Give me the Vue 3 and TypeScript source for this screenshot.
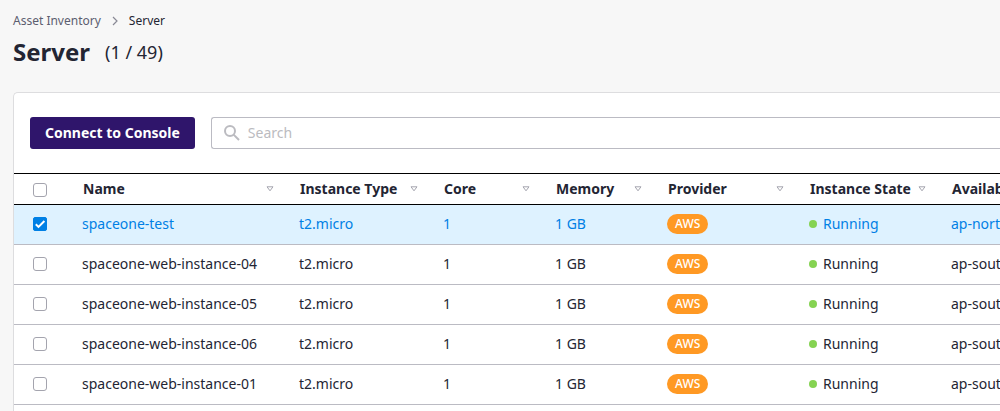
<script setup lang="ts">
import { computed, ref } from 'vue'

interface Column {
  key: string
  label: string
}

interface Server {
  name: string
  type: string
  core: number
  memory: string
  provider: string
  state: string
  zone: string
}

const columns: Column[] = [
  { key: 'name', label: 'Name' },
  { key: 'type', label: 'Instance Type' },
  { key: 'core', label: 'Core' },
  { key: 'memory', label: 'Memory' },
  { key: 'provider', label: 'Provider' },
  { key: 'state', label: 'Instance State' },
  { key: 'zone', label: 'Availability Zone' },
]

const makeServer = (name: string, zone: string): Server => ({
  name,
  type: 't2.micro',
  core: 1,
  memory: '1 GB',
  provider: 'AWS',
  state: 'Running',
  zone,
})

const servers: Server[] = [
  makeServer('spaceone-test', 'ap-northeast-2a'),
  makeServer('spaceone-web-instance-04', 'ap-southeast-1a'),
  makeServer('spaceone-web-instance-05', 'ap-southeast-1a'),
  makeServer('spaceone-web-instance-06', 'ap-southeast-1a'),
  makeServer('spaceone-web-instance-01', 'ap-southeast-1a'),
]

const total = 49
const query = ref('')
const selected = ref<string[]>(['spaceone-test'])

const allSelected = computed({
  get: () => selected.value.length === servers.length,
  set: (on: boolean) => {
    selected.value = on ? servers.map((s) => s.name) : []
  },
})
</script>

<template>
  <main class="page">
    <header class="heading">
      <nav class="crumbs" aria-label="Breadcrumb">
        <a href="#inventory">Asset Inventory</a>
        <svg class="chevron" viewBox="0 0 8 10" aria-hidden="true"><path d="M2 1l4 4-4 4" /></svg>
        <a href="#server" class="current" aria-current="page">Server</a>
      </nav>
      <div class="title-row">
        <h1>Server</h1>
        <span class="count">({{ selected.length }} / {{ total }})</span>
      </div>
    </header>

    <section class="card">
      <div class="toolbar">
        <button type="button" class="primary">Connect to Console</button>
        <label class="search">
          <svg viewBox="0 0 16 16" aria-hidden="true">
            <circle cx="6" cy="6" r="5" />
            <path d="M9.6 9.6l5.4 5.4" />
          </svg>
          <input v-model="query" type="text" placeholder="Search" aria-label="Search" />
        </label>
      </div>

      <div class="table-wrap">
        <table>
          <colgroup>
            <col class="w-check" />
            <col v-for="c in columns" :key="c.key" :class="`w-${c.key}`" />
          </colgroup>
          <thead>
            <tr>
              <th class="check">
                <input v-model="allSelected" type="checkbox" aria-label="Select all servers" />
              </th>
              <th v-for="c in columns" :key="c.key" scope="col">
                <div class="head">
                  <span>{{ c.label }}</span>
                  <svg viewBox="0 0 8 6" aria-hidden="true"><path d="M1 .8h6L4 4.8z" /></svg>
                </div>
              </th>
            </tr>
          </thead>
          <tbody>
            <tr v-for="s in servers" :key="s.name" :class="{ selected: selected.includes(s.name) }">
              <td class="check">
                <input v-model="selected" type="checkbox" :value="s.name" :aria-label="`Select ${s.name}`" />
              </td>
              <td>{{ s.name }}</td>
              <td>{{ s.type }}</td>
              <td>{{ s.core }}</td>
              <td>{{ s.memory }}</td>
              <td><span class="badge">{{ s.provider }}</span></td>
              <td><span class="state">{{ s.state }}</span></td>
              <td>{{ s.zone }}</td>
            </tr>
          </tbody>
        </table>
      </div>
    </section>
  </main>
</template>

<style>
body {
  background: #f7f7f7;
}
</style>

<style scoped>
.page {
  box-sizing: border-box;
  display: flex;
  flex-direction: column;
  min-height: 100vh;
  padding: 12px 0 0 13px;
  overflow: hidden;
  background: #f7f7f7;
  color: #232533;
  font-family: 'Noto Sans', sans-serif;
  font-size: 14px;
  line-height: 20px;
}

.heading {
  margin-bottom: 24px;
}

.crumbs {
  display: flex;
  align-items: center;
  font-size: 12px;
  line-height: 18px;
}

.crumbs a {
  color: #5c5e70;
  text-decoration: none;
}

.crumbs a.current {
  color: #232533;
}

.chevron {
  width: 8px;
  height: 10px;
  margin: 0 10px;
  fill: none;
  stroke: #898995;
  stroke-width: 1.2;
}

.title-row {
  display: flex;
  align-items: center;
  gap: 15px;
  margin-top: 6px;
  line-height: 32px;
}

h1 {
  margin: 0;
  font-size: 24px;
  font-weight: 700;
}

.count {
  font-size: 18px;
}

.card {
  flex: 1;
  border: 1px solid #dddddf;
  border-right: 0;
  border-bottom: 0;
  border-radius: 5px 0 0 0;
  background: #fff;
}

.toolbar {
  display: flex;
  gap: 16px;
  padding: 24px 0 24px 16px;
}

.primary {
  flex: none;
  height: 32px;
  padding: 0 15px;
  border: 0;
  border-radius: 3px;
  background: #2f156b;
  color: #fff;
  font: inherit;
  font-weight: 700;
}

.search {
  box-sizing: border-box;
  display: flex;
  flex: 1;
  align-items: center;
  gap: 8px;
  height: 32px;
  padding-left: 12px;
  border: 1px solid #bbbbc3;
  border-right: 0;
  border-radius: 3px 0 0 3px;
}

.search svg {
  flex: none;
  width: 16px;
  height: 16px;
  fill: none;
  stroke: #bbbbc0;
  stroke-width: 2;
}

.search input {
  flex: 1;
  min-width: 0;
  padding: 0;
  border: 0;
  outline: 0;
  background: none;
  color: inherit;
  font: inherit;
}

.search input::placeholder {
  color: #bbbbc0;
  opacity: 1;
}

.table-wrap {
  overflow: hidden;
}

table {
  width: 1080px;
  border-spacing: 0;
  table-layout: fixed;
}

.w-check { width: 53px; }
.w-name { width: 217px; }
.w-type { width: 144px; }
.w-core,
.w-memory { width: 112px; }
.w-provider,
.w-state { width: 142px; }

th,
td {
  box-sizing: border-box;
  text-align: left;
  white-space: nowrap;
}

th {
  height: 32px;
  padding: 0 10px 0 16px;
  border-top: 1px solid #000;
  border-bottom: 1px solid #000;
  font-weight: 700;
}

td {
  height: 40px;
  padding: 0 10px 2px 15px;
  border-bottom: 1px solid #bbbbc3;
}

.selected td {
  background: #def2ff;
  color: #0080e5;
}

.head {
  display: flex;
  align-items: center;
  justify-content: space-between;
}

.head svg {
  width: 8px;
  height: 6px;
  fill: none;
  stroke: #a4a4ae;
  stroke-width: 1;
}

.check {
  padding-left: 19px;
}

th.check {
  padding-top: 2px;
}

.check input {
  display: block;
  box-sizing: border-box;
  width: 14px;
  height: 14px;
  margin: 0;
  border: 1px solid #a4a4ae;
  border-radius: 3px;
  appearance: none;
  background: #fff;
}

.check input:checked {
  border-color: #0080e5;
  border-radius: 2px;
  background: #0080e5
    url("data:image/svg+xml,%3Csvg xmlns='http://www.w3.org/2000/svg' viewBox='0 0 12 12'%3E%3Cpath d='M1.8 6.2l2.7 2.7L10.4 3' fill='none' stroke='%23fff' stroke-width='2'/%3E%3C/svg%3E")
    center / 12px 12px no-repeat;
}

.badge {
  display: inline-block;
  padding: 0 8px;
  border-radius: 10px;
  background: #ff9924;
  color: #fff;
  font-size: 12px;
  font-weight: 500;
  vertical-align: middle;
}

.state {
  display: flex;
  align-items: center;
  gap: 6px;
}

.state::before {
  width: 8px;
  height: 8px;
  border-radius: 50%;
  background: #85d352;
  content: '';
}
</style>
